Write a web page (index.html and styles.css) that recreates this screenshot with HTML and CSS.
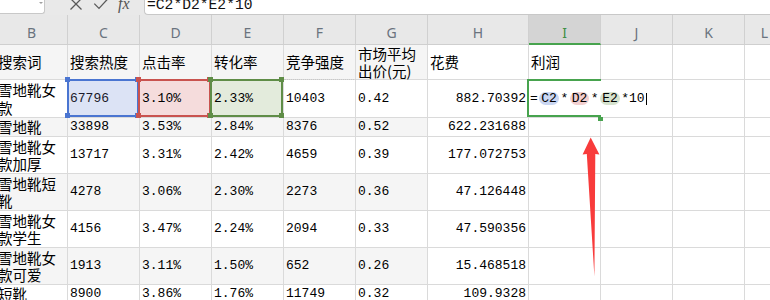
FILE: index.html
```html
<!DOCTYPE html>
<html lang="zh-CN">
<head>
<meta charset="utf-8">
<title>利润公式</title>
<link rel="stylesheet" href="styles.css">
</head>
<body>
<div class="app">
  <div class="toolbar">
    <div class="namebox"><span class="caret"></span></div>
    <svg class="tools" width="40" height="15" viewBox="0 0 40 15">
      <path d="M2.5 -1.5 L13.5 9.5 M13.5 -1.5 L2.5 9.5" stroke="#5a5a5a" stroke-width="1.3" fill="none"/>
      <path d="M26.3 3.6 L31 8.4 L39.3 -0.6" stroke="#5a5a5a" stroke-width="1.3" fill="none"/>
    </svg>
    <div class="fx"><span>fx</span></div>
    <div class="formula"><span>=C2*D2*E2*10</span></div>
  </div>

  <div class="sheet">
    <div class="h">B</div><div class="h">C</div><div class="h">D</div><div class="h">E</div><div class="h">F</div><div class="h">G</div><div class="h">H</div><div class="h hsel">I</div><div class="h">J</div><div class="h">K</div><div class="h">L</div>

    <div class="c b">搜索词</div><div class="c b">搜索热度</div><div class="c b">点击率</div><div class="c b">转化率</div><div class="c b">竞争强度</div><div class="c b">市场平均出价(元)</div><div class="c">花费</div><div class="c">利润</div><div class="c"></div><div class="c"></div><div class="c"></div>

    <div class="c">雪地靴女款</div>
    <div class="c n sel s-blue">67796<div class="ring"><i class="hd tl"></i><i class="hd bl"></i><i class="hd tr"></i><i class="hd br"></i></div></div>
    <div class="c n sel s-red">3.10%<div class="ring ring-l"><i class="hd tl"></i><i class="hd bl"></i><i class="hd tr"></i><i class="hd br"></i></div></div>
    <div class="c n sel s-green">2.33%<div class="ring ring-l"><i class="hd tl"></i><i class="hd bl"></i><i class="hd tr"></i><i class="hd br"></i></div></div>
    <div class="c n dotted">10403</div><div class="c n">0.42</div><div class="c n r">882.70392</div>
    <div class="c n edit">=<span class="p p-blue">C2</span>*<span class="p p-red">D2</span>*<span class="p p-green">E2</span>*10<span class="cursor"></span><div class="ering"></div><i class="fill"></i></div>
    <div class="c"></div><div class="c"></div>

    <div class="c b">雪地靴</div><div class="c n b">33898</div><div class="c n b">3.53%</div><div class="c n b">2.84%</div><div class="c n b">8376</div><div class="c n b">0.52</div><div class="c n r">622.231688</div><div class="c"></div><div class="c"></div><div class="c"></div><div class="c"></div>

    <div class="c">雪地靴女款加厚</div><div class="c n">13717</div><div class="c n">3.31%</div><div class="c n">2.42%</div><div class="c n">4659</div><div class="c n">0.39</div><div class="c n r">177.072753</div><div class="c"></div><div class="c"></div><div class="c"></div><div class="c"></div>

    <div class="c b">雪地靴短靴</div><div class="c n b">4278</div><div class="c n b">3.06%</div><div class="c n b">2.30%</div><div class="c n b">2273</div><div class="c n b">0.36</div><div class="c n r">47.126448</div><div class="c"></div><div class="c"></div><div class="c"></div><div class="c"></div>

    <div class="c">雪地靴女款学生</div><div class="c n">4156</div><div class="c n">3.47%</div><div class="c n">2.24%</div><div class="c n">2094</div><div class="c n">0.33</div><div class="c n r">47.590356</div><div class="c"></div><div class="c"></div><div class="c"></div><div class="c"></div>

    <div class="c b">雪地靴女款可爱</div><div class="c n b">1913</div><div class="c n b">3.11%</div><div class="c n b">1.50%</div><div class="c n b">652</div><div class="c n b">0.26</div><div class="c n r">15.468518</div><div class="c"></div><div class="c"></div><div class="c"></div><div class="c"></div>

    <div class="c">短靴</div><div class="c n">8900</div><div class="c n">3.86%</div><div class="c n">1.76%</div><div class="c n">11749</div><div class="c n">0.32</div><div class="c n r">109.9328</div><div class="c"></div><div class="c"></div><div class="c"></div><div class="c"></div>
  </div>

  <svg class="arrow" width="770" height="300" viewBox="0 0 770 300">
    <polygon points="590.7,137.5 599.4,154.6 595.3,154 594.4,276.5 586.8,154 582.6,154.6" fill="#f83b3b"/>
  </svg>
</div>
</body>
</html>
```

FILE: styles.css
```css
body {
  margin: 0;
  background: #fff;
}

.app {
  position: relative;
  width: 770px;
  height: 300px;
  overflow: hidden;
  background: #fff;
  font-family: "Noto Sans CJK SC", "Noto Sans", sans-serif;
}

/* ---------- formula toolbar ---------- */
.toolbar {
  display: flex;
  align-items: flex-start;
  height: 15px;
  background: #e9e9e9;
  overflow: hidden;
}

.namebox {
  position: relative;
  width: 45px;
  height: 14px;
  box-sizing: border-box;
  background: #fff;
  border-right: 1px solid #c8c8c8;
  border-bottom: 1px solid #c8c8c8;
  border-bottom-right-radius: 3px;
}

.caret {
  position: absolute;
  right: 1px;
  top: 2px;
  width: 0;
  height: 0;
  border-left: 2px solid transparent;
  border-right: 2px solid transparent;
  border-top: 2px solid #a0a0a0;
}

.tools {
  display: block;
  margin-left: 23px;
  flex: none;
}

.fx {
  width: 26px;
  margin-left: 10px;
  flex: none;
  font-family: "Liberation Serif", serif;
  font-style: italic;
  font-size: 16px;
  color: #555;
}

.fx span {
  display: block;
  line-height: 7px;
  padding-top: 0;
}

.formula {
  flex: 1;
  height: 15px;
  box-sizing: border-box;
  background: #fff;
  border-left: 1px solid #c8c8c8;
  border-bottom: 1px solid #c8c8c8;
  border-bottom-left-radius: 4px;
  padding-left: 2px;
  font-family: "Liberation Mono", monospace;
  font-size: 14.67px;
  color: #111;
}

.formula span {
  display: block;
  line-height: 10px;
}

/* ---------- sheet grid ---------- */
.sheet {
  display: grid;
  grid-template-columns: repeat(6, 72px) 101px repeat(3, 72px) 40px;
  grid-template-rows: 30px 35px 38px 19px 37px 37px 37px 37px 19px;
  margin-left: -4px;
}

.h {
  display: flex;
  justify-content: center;
  align-items: center;
  padding-top: 6px;
  box-sizing: border-box;
  background: #e8e8e8;
  border-right: 1px solid #d0d0d0;
  border-bottom: 1px solid #cfcfcf;
  font-family: "Noto Sans", sans-serif;
  font-size: 14px;
  color: #6a737e;
}

.hsel {
  background: #d4d4d4;
  border-bottom: 2px solid #47a34e;
  color: #3f8f45;
}

.c {
  display: flex;
  align-items: center;
  min-width: 0;
  box-sizing: border-box;
  padding: 0 2px;
  border-right: 1px solid #dadada;
  border-bottom: 1px solid #dadada;
  font-size: 14.5px;
  line-height: 17.3px;
  color: #000;
  word-break: break-all;
}

.b {
  background: #f5f5f5;
}

.n {
  font-family: "Liberation Mono", monospace;
  font-size: 13px;
}

.r {
  justify-content: flex-end;
}

.dotted {
  border-top: 1px dotted #c8c8c8;
  margin-top: -1px;
}

/* ---------- selection ranges ---------- */
.sel {
  position: relative;
}

.s-blue { background: #dce3f5; color: #1a1a2a; }
.s-red { background: #f5dcdc; }
.s-green { background: #e3ebdc; }

.ring {
  position: absolute;
  left: -1px;
  top: -1px;
  right: 0;
  bottom: 0;
  border: 2px solid;
}

.ring-l {
  left: -2px;
}

.s-blue .ring { border-color: #4a75d1; color: #4a75d1; }
.s-red .ring { border-color: #c9534f; color: #c9534f; }
.s-green .ring { border-color: #5f8d47; color: #5f8d47; }

.hd {
  position: absolute;
  width: 5px;
  height: 5px;
  background: currentColor;
}

.hd.tl { left: -4px; top: -4px; }
.hd.bl { left: -4px; bottom: -3px; }
.hd.tr { right: -3px; top: -4px; }
.hd.br { right: -3px; bottom: -3px; }

/* ---------- editing cell ---------- */
.edit {
  grid-column: span 2;
  position: relative;
  padding-left: 1px;
  white-space: nowrap;
  background: #fff;
}

.ering {
  position: absolute;
  left: -2px;
  top: -1px;
  bottom: 0;
  width: 74px;
  box-sizing: border-box;
  border: 2px solid #47a34e;
  border-right: none;
}

.fill {
  position: absolute;
  left: 69px;
  top: 37px;
  width: 5px;
  height: 4px;
  background: #47a34e;
}

.p {
  display: inline-block;
  padding: 0 2px;
  margin: 0 1.5px;
  border-radius: 7px;
  line-height: 13px;
}

.p-blue { background: #c9d6f2; }
.p-red { background: #f2cfcf; }
.p-green { background: #d5e2cd; }

.cursor {
  display: inline-block;
  width: 1px;
  height: 12px;
  margin-left: 1px;
  background: #000;
}

/* ---------- annotation arrow ---------- */
.arrow {
  position: absolute;
  left: 0;
  top: 0;
  pointer-events: none;
}
```
